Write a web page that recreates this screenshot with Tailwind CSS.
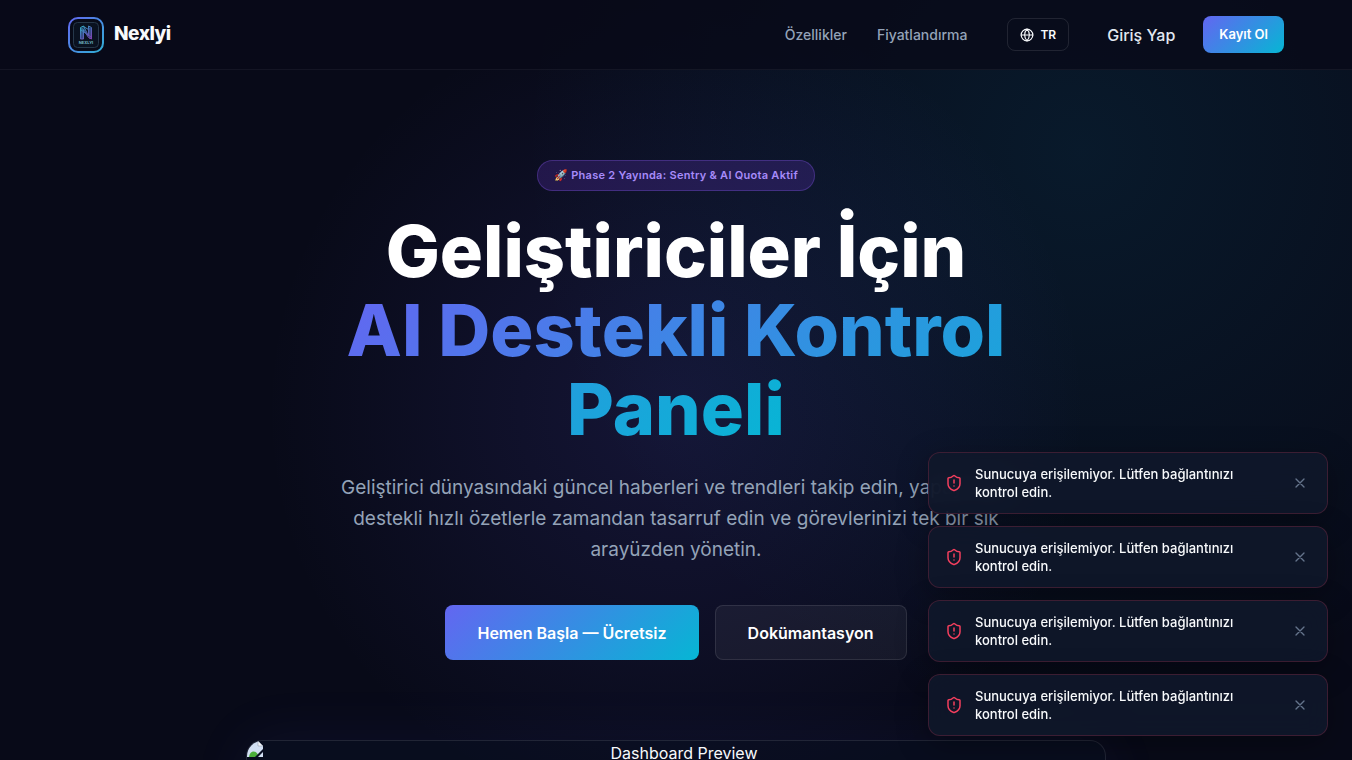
<!DOCTYPE html>
<html lang="tr">
<head>
    <meta charset="UTF-8">
    <meta name="viewport" content="width=device-width, initial-scale=1.0">
    <title>Nexlyi</title>
    <script src="https://cdn.jsdelivr.net/npm/@tailwindcss/browser@4"></script>
</head>
<body class="bg-[#080a18] text-[#f8fafc] font-['Inter',sans-serif] antialiased">
    <div class="relative min-h-screen overflow-hidden bg-[radial-gradient(circle_at_80%_20%,rgba(14,165,213,0.1),transparent_560px),radial-gradient(circle_at_50%_54%,rgba(99,90,241,0.14),transparent_410px)]">

        <header class="border-b border-white/5 bg-[#080a18]/75">
            <div class="max-w-7xl mx-auto px-8 py-4 flex items-center justify-between">
                <a href="#" class="flex items-center gap-2.5">
                    <svg class="size-9" viewBox="0 0 36 36" fill="none" aria-hidden="true">
                        <defs>
                            <linearGradient id="ring" x1="0" y1="0" x2="36" y2="36" gradientUnits="userSpaceOnUse">
                                <stop stop-color="#6366f1"/>
                                <stop offset="1" stop-color="#2fb0d4"/>
                            </linearGradient>
                            <linearGradient id="mark" x1="12" y1="9" x2="23" y2="23" gradientUnits="userSpaceOnUse">
                                <stop stop-color="#2fb6c4"/>
                                <stop offset="0.5" stop-color="#4f66b8"/>
                                <stop offset="1" stop-color="#8a3fb0"/>
                            </linearGradient>
                        </defs>
                        <rect x="1" y="1" width="34" height="34" rx="9" fill="#080b18" stroke="url(#ring)" stroke-width="2"/>
                        <rect x="5.5" y="5.5" width="25" height="25" rx="4" fill="#0a1220" stroke="#26384a"/>
                        <path d="M12.500 22V10.500l3-1.500 5 10V9l3 1.500V22l-3-1.500-5-8V22z" stroke="url(#mark)" stroke-width="1" fill="#2f5f9a" fill-opacity="0.5"/>
                        <path d="M14 11v11M22 11v11M13 13l10 7M15.500 9.500l5 3" stroke="url(#mark)" stroke-width="1"/>
                        <text x="18" y="27" text-anchor="middle" font-size="4" font-weight="700" fill="#6fb6c4">NEXLYI</text>
                    </svg>
                    <span class="text-[19px] font-extrabold tracking-tight">Nexlyi</span>
                </a>

                <nav class="flex items-center">
                    <div class="flex items-center gap-[30px] mr-10 text-sm font-medium text-[#94a3b8]">
                        <a href="#features">Özellikler</a>
                        <a href="#pricing">Fiyatlandırma</a>
                    </div>
                    <button type="button" class="flex items-center gap-1.5 h-[33px] px-3 rounded-lg border border-white/10 text-xs font-semibold">
                        <svg class="size-3.5" viewBox="0 0 24 24" fill="none" stroke="currentColor" stroke-width="2" stroke-linecap="round" stroke-linejoin="round" aria-hidden="true">
                            <circle cx="12" cy="12" r="10"/>
                            <path d="M12 2a14.500 14.500 0 0 0 0 20 14.500 14.500 0 0 0 0-20"/>
                            <path d="M2 12h20"/>
                        </svg>
                        TR
                    </button>
                    <a href="#login" class="ml-[38px] mr-7 font-medium text-[#e2e8f0]">Giriş Yap</a>
                    <a href="#register" class="px-4 h-[37px] flex items-center rounded-lg bg-linear-135/srgb from-[#6366f1] to-[#06b6d4] text-[13px] font-semibold text-white">Kayıt Ol</a>
                </nav>
            </div>
        </header>

        <main class="flex flex-col items-center px-8 pt-[90px] text-center">
            <div class="px-4 h-[31px] flex items-center rounded-full border border-[#8b5cf6]/30 bg-[#7c3aed]/20 text-[11px] font-semibold tracking-wide text-[#a78bfa]">🚀 Phase 2 Yayında: Sentry &amp; AI Quota Aktif</div>

            <h1 class="mt-5 max-w-[800px] text-7xl leading-[79px] font-extrabold text-white">
                Geliştiriciler İçin<br>
                <span class="bg-linear-135/srgb from-[#6366f1] to-[#06b6d4] bg-clip-text text-transparent">AI Destekli Kontrol<br>Paneli</span>
            </h1>

            <p class="mt-6 max-w-[700px] text-[19px] leading-[31px] text-[#94a3b8]">
                Geliştirici dünyasındaki güncel haberleri ve trendleri takip edin, yapay zeka destekli hızlı özetlerle zamandan tasarruf edin ve görevlerinizi tek bir sık arayüzden yönetin.
            </p>

            <div class="mt-10 flex gap-4">
                <a href="#register" class="px-8 h-[55px] flex items-center rounded-lg bg-linear-135/srgb from-[#6366f1] to-[#06b6d4] font-semibold text-white">Hemen Başla — Ücretsiz</a>
                <a href="#docs" class="px-8 h-[55px] flex items-center rounded-lg border border-white/10 bg-white/5 font-semibold text-white">Dokümantasyon</a>
            </div>

            <div class="mt-20 w-full max-w-[860px] h-0">
                <div class="flex items-start h-[480px] overflow-hidden rounded-2xl border border-white/10 bg-[#0a1128]/40 shadow-[0_0_60px_rgba(99,102,241,0.08)]">
                    <svg class="size-4" viewBox="0 0 16 16" aria-hidden="true">
                        <path d="M0 0h11l5 5v11H0z" fill="#d3e0f3"/>
                        <path d="M11 0v5h5z" fill="#f4f7fb" stroke="#8a93a3" stroke-width="0.500"/>
                        <path d="M2 16c1-7 7-7 9-2v2z" fill="#4caf3a"/>
                        <path d="M8 16l8-8v3l-5 5z" fill="#0b1024"/>
                    </svg>
                    <span class="flex-1">Dashboard Preview</span>
                </div>
            </div>
        </main>
    </div>

    <div id="toasts" class="fixed right-6 bottom-6 w-[400px] flex flex-col gap-3"></div>

    <script>
        const messages = Array(4).fill('Sunucuya erişilemiyor. Lütfen bağlantınızı kontrol edin.');

        document.getElementById('toasts').innerHTML = messages.map(m => `
            <div role="alert" class="flex items-center gap-3 px-4 py-3 rounded-xl border border-[#f43f5e]/20 bg-[#0f172a]/90 backdrop-blur-md shadow-[0_8px_32px_rgba(0,0,0,0.3)]">
                <svg class="size-[18px] shrink-0 text-[#f43f5e]" viewBox="0 0 24 24" fill="none" stroke="currentColor" stroke-width="2" stroke-linecap="round" stroke-linejoin="round" aria-hidden="true">
                    <path d="M20 13c0 5-3.500 7.500-7.660 8.950a1 1 0 0 1-.67-.01C7.500 20.500 4 18 4 13V6a1 1 0 0 1 1-1c2 0 4.500-1.200 6.240-2.720a1.170 1.170 0 0 1 1.520 0C14.510 3.810 17 5 19 5a1 1 0 0 1 1 1z"/>
                    <path d="M12 8v4M12 16h.01"/>
                </svg>
                <p class="flex-1 text-[13px] leading-[18px] font-medium text-[#f8fafc]">${m}</p>
                <button type="button" aria-label="Kapat" class="p-[3px] text-[#64748b]">
                    <svg class="size-4" viewBox="0 0 24 24" fill="none" stroke="currentColor" stroke-width="2" stroke-linecap="round" aria-hidden="true">
                        <path d="M18 6 6 18M6 6l12 12"/>
                    </svg>
                </button>
            </div>
        `).join('');

        document.querySelectorAll('#toasts button').forEach(b => {
            b.addEventListener('click', () => b.parentElement.remove());
        });
    </script>
</body>
</html>
